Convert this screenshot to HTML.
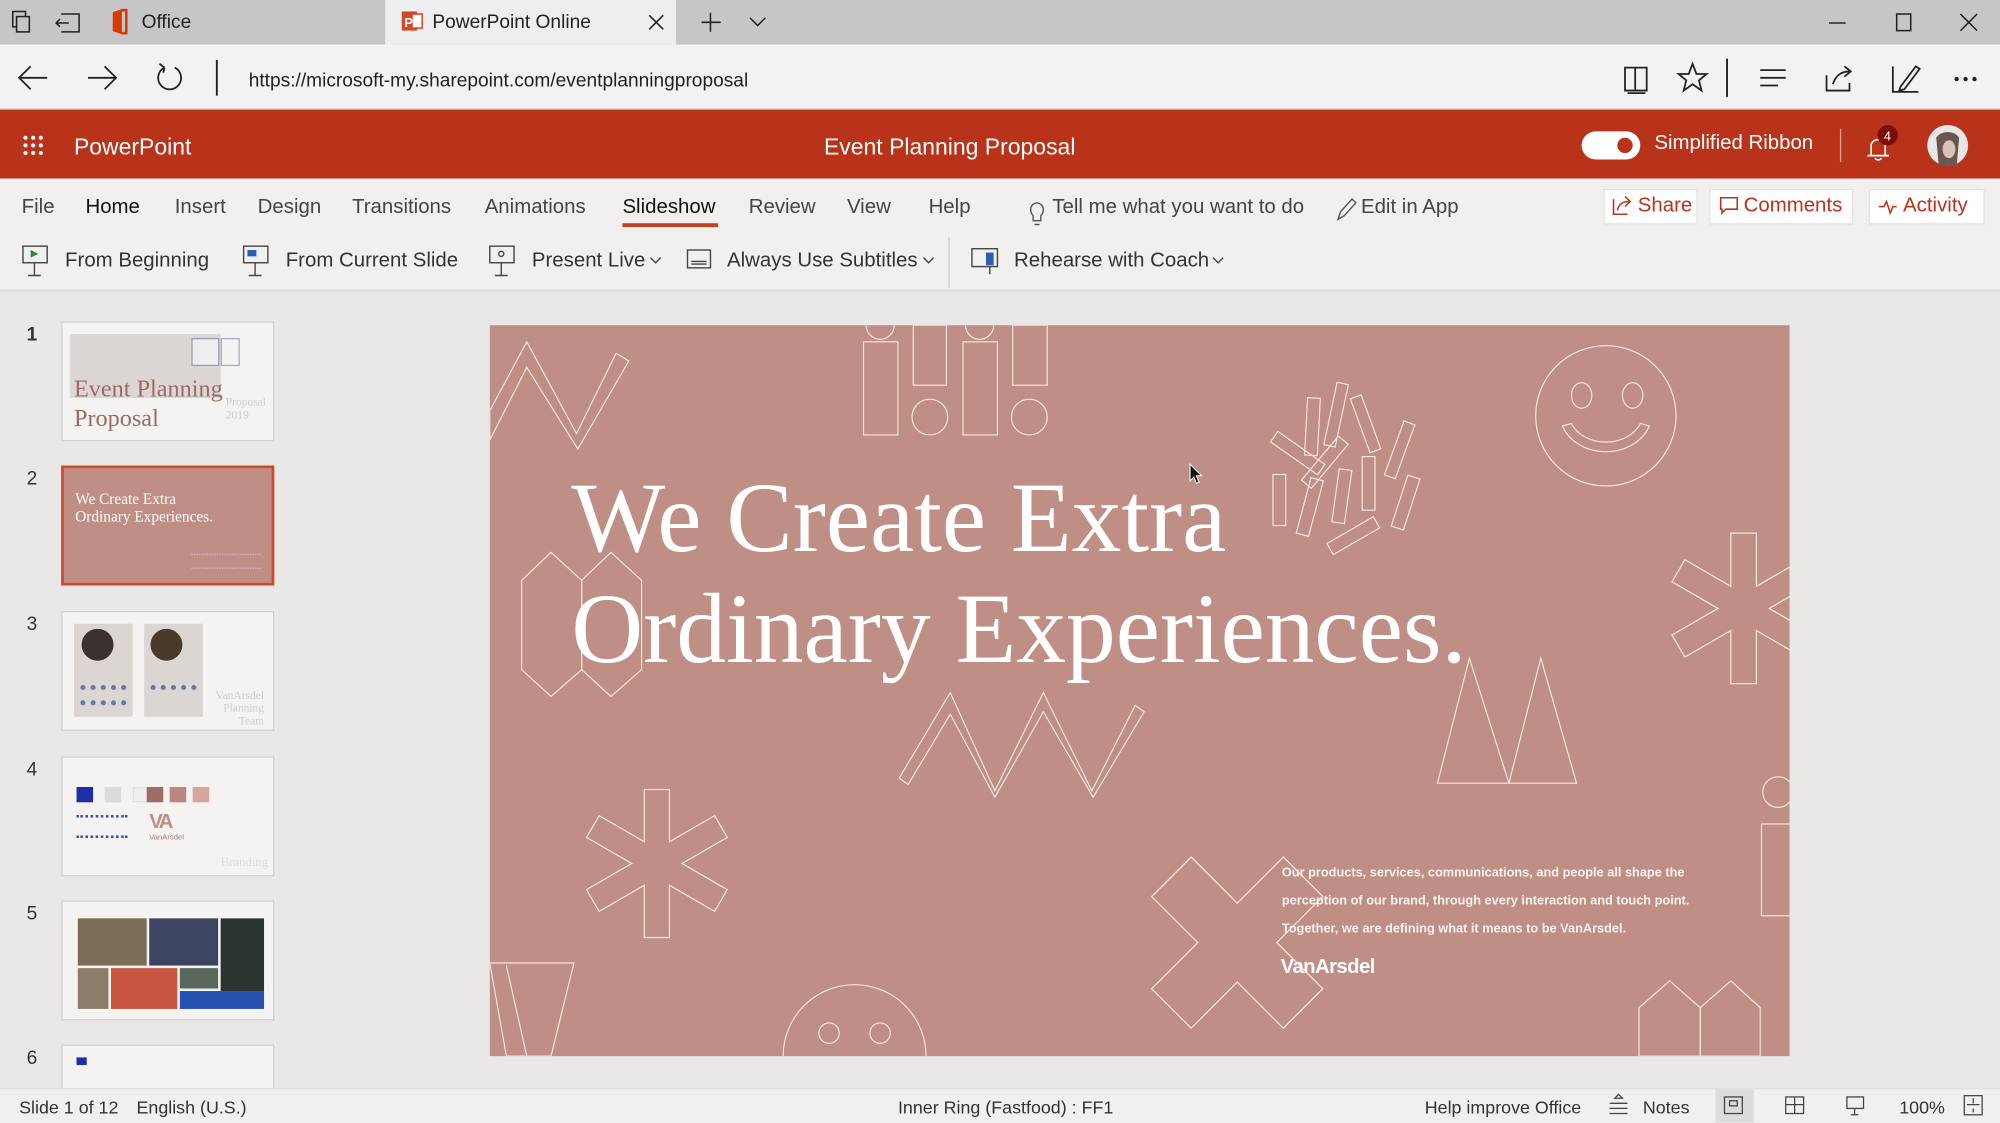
<!DOCTYPE html>
<html><head><meta charset="utf-8">
<style>
*{margin:0;padding:0;box-sizing:border-box}
html,body{width:2000px;height:1123px;overflow:hidden;background:#eae8e6}
#w{position:absolute;left:0;top:0;width:1568px;height:880px;transform:scale(1.27551);transform-origin:0 0;font-family:"Liberation Sans",sans-serif;color:#333;background:#eae8e6}
.a{position:absolute;white-space:nowrap}
.ser{font-family:"Liberation Serif",serif}
svg{position:absolute;overflow:visible}
.btn{position:absolute;top:148px;height:28px;background:#fff;border:1px solid #e3e1df;color:#b7341b;font-size:16px;line-height:26px;padding-left:26px}
.thumb{position:absolute;left:48px;width:167px;height:94px;border:1px solid #d4d2d0;background:#f4f3f2;overflow:hidden}
.num{position:absolute;left:18px;width:14px;text-align:center;font-size:15px;color:#333}
.t{top:154px;font-size:16px;color:#444}
.r{top:196px;font-size:16px;color:#333}
</style></head><body><div id="w">

<div class="a" style="left:0;top:0;width:1568px;height:35px;background:#c6c5c8"></div>
<div class="a" style="left:302px;top:0;width:228px;height:35px;background:#eeedef"></div>
<svg style="left:0;top:0" width="1568" height="35" fill="none" stroke="#222" stroke-width="1.2">
<rect x="10" y="9" width="10" height="12"/><rect x="13" y="13" width="10" height="12" fill="#c6c5c8"/>
<path d="M48 11h14v14h-14M44 18h10M47 15l-3 3 3 3"/>
<path d="M89 10l6-2v18l-6-2z" fill="#d83b01" stroke="#d83b01"/><path d="M95 8h4v18h-4" stroke="#d83b01" stroke-width="2"/>
<rect x="315" y="9" width="12" height="15" fill="#d24726" stroke="none"/><rect x="323" y="11" width="8" height="11" fill="#fff" stroke="#d24726"/>
<text x="317" y="21" fill="#fff" stroke="none" font-size="10" font-family="Liberation Sans" font-weight="bold">P</text>
<path d="M509 12l11 11M520 12l-11 11"/>
<path d="M557 10v15M550 17.5h15"/><path d="M588 14l6 6 6-6"/>
<path d="M1434 18h13"/><rect x="1487" y="11" width="11" height="13"/><path d="M1537 11l13 13M1550 11l-13 13"/>
</svg>
<div class="a" style="left:111px;top:9px;font-size:15px;color:#222">Office</div>
<div class="a" style="left:339px;top:9px;font-size:15px;color:#222">PowerPoint Online</div>

<div class="a" style="left:0;top:35px;width:1568px;height:51px;background:#f2f2f2;border-bottom:1px solid #c9c9c9"></div>
<svg style="left:0;top:35px" width="1568" height="51" fill="none" stroke="#222" stroke-width="1.4">
<path d="M15 26h22M24 17l-9 9 9 9"/><path d="M69 26h22M82 17l9 9-9 9"/>
<path d="M129 18a9 9 0 1 0 8 0M129 18l-4-3M129 18l-1 4"/>
<path d="M170 12v28" stroke-width="1.5"/>
<path d="M1274 18h8v18h-8zM1282 18h9v18h-9zM1276 38h14"/>
<path d="M1327 15l3 8h8l-6 5 2 8-7-5-7 5 2-8-6-5h8z"/>
<path d="M1354 11v30" stroke-width="1.5"/>
<path d="M1380 20h20M1380 26h20M1380 32h14"/>
<path d="M1432 24v12h18v-6M1437 31c2-7 7-10 13-10M1446 17l5 4-5 4"/>
<path d="M1484 17v20h20M1490 33l12-16 3 2-12 16-4 1z"/>
<circle cx="1534" cy="27" r="1" fill="#222"/><circle cx="1541" cy="27" r="1" fill="#222"/><circle cx="1548" cy="27" r="1" fill="#222"/>
</svg>
<div class="a" style="left:195px;top:55px;font-size:15px;color:#222">https://microsoft-my.sharepoint.com/eventplanningproposal</div>

<div class="a" style="left:0;top:86px;width:1568px;height:54px;background:#b8331a"></div>
<svg style="left:0;top:86px" width="1568" height="54">
<g fill="#fff"><circle cx="20" cy="22" r="1.6"/><circle cx="26" cy="22" r="1.6"/><circle cx="32" cy="22" r="1.6"/><circle cx="20" cy="28" r="1.6"/><circle cx="26" cy="28" r="1.6"/><circle cx="32" cy="28" r="1.6"/><circle cx="20" cy="34" r="1.6"/><circle cx="26" cy="34" r="1.6"/><circle cx="32" cy="34" r="1.6"/></g>
<rect x="1240" y="17" width="46" height="22" rx="11" fill="#fff"/><circle cx="1274" cy="28" r="6" fill="#b8331a"/>
<path d="M1443 15v26" stroke="#e8a090" stroke-width="1"/>
<path d="M1467 36v-9a6 6 0 0 1 11 0v9h3h-17zM1470 38a3 3 0 0 0 5 0" fill="none" stroke="#fff" stroke-width="1.3"/>
<circle cx="1480" cy="20" r="8" fill="#7a0f0a"/><text x="1477" y="24" fill="#fff" font-size="10" font-family="Liberation Sans">4</text>
<circle cx="1527" cy="28" r="16" fill="#e8e6e6"/><path d="M1518 22a10 8 0 0 1 18 0l-2 22h-14z" fill="#6a5750"/><ellipse cx="1528" cy="31" rx="5" ry="7" fill="#d9c3b5"/>
</svg>
<div class="a" style="left:58px;top:105px;font-size:18px;color:#fff">PowerPoint</div>
<div class="a" style="left:646px;top:105px;font-size:18px;color:#fff">Event Planning Proposal</div>
<div class="a" style="left:1297px;top:104px;font-size:16px;color:#fff">Simplified Ribbon</div>

<div class="a" style="left:0;top:140px;width:1568px;height:88px;background:#f1f0ef;border-bottom:1px solid #dedcda;box-shadow:0 1px 3px rgba(0,0,0,.06)"></div>
<div class="a t" style="left:17px">File</div>
<div class="a t" style="left:67px;color:#111">Home</div>
<div class="a t" style="left:137px">Insert</div>
<div class="a t" style="left:202px">Design</div>
<div class="a t" style="left:276px">Transitions</div>
<div class="a t" style="left:380px">Animations</div>
<div class="a t" style="left:488px;color:#111">Slideshow</div>
<div class="a" style="left:488px;top:175px;width:75px;height:3px;background:#c4401f"></div>
<div class="a t" style="left:587px">Review</div>
<div class="a t" style="left:664px">View</div>
<div class="a t" style="left:728px">Help</div>
<div class="a t" style="left:825px">Tell me what you want to do</div>
<div class="a t" style="left:1067px">Edit in App</div>
<svg style="left:0;top:140px" width="1568" height="90" fill="none" stroke="#555" stroke-width="1.1">
<path d="M810 29c-3-3-3-9 3-10 6 1 6 7 3 10v4h-6z M811 36h4"/>
<path d="M1049 32l2-6 9-10 3 3-9 10z"/>
</svg>
<div class="btn" style="left:1257px;width:74px">Share</div>
<div class="btn" style="left:1340px;width:113px">Comments</div>
<div class="btn" style="left:1465px;width:91px">Activity</div>
<svg style="left:0;top:140px" width="1568" height="90" fill="none" stroke="#b7341b" stroke-width="1.2">
<path d="M1265 16v12h11M1268 25c1-5 4-7 9-7M1274 14l4 4-4 4"/>
<path d="M1349 15h13v9h-9l-3 3v-3h-1z"/>
<path d="M1473 22h4l2-4 3 9 2-5h3"/>
</svg>

<svg style="left:0;top:183px" width="1000" height="45" fill="none" stroke="#444" stroke-width="1.1">
<rect x="18" y="10" width="19" height="13"/><path d="M27 23v10M22 33h10"/><path d="M24 13l6 3-6 3z" fill="#2a8a3a" stroke="none"/>
<rect x="191" y="10" width="19" height="13"/><path d="M200 23v10M195 33h10"/><rect x="194" y="13" width="7" height="5" fill="#2b5fb4" stroke="none"/>
<rect x="384" y="10" width="19" height="13"/><path d="M393 23v10M388 33h10"/><circle cx="393" cy="16" r="2"/>
<path d="M510 19l4 4 4-4M724 19l4 4 4-4M951 19l4 4 4-4"/>
<rect x="539" y="13" width="18" height="14"/><path d="M542 22h12M542 24h12"/>
<path d="M744 3v40" stroke="#ccc"/>
<rect x="762" y="12" width="20" height="14"/><rect x="773" y="15" width="6" height="10" fill="#2b5fb4" stroke="none"/><path d="M776 26v6"/>
</svg>
<div class="a r" style="left:51px">From Beginning</div>
<div class="a r" style="left:224px">From Current Slide</div>
<div class="a r" style="left:417px">Present Live</div>
<div class="a r" style="left:570px">Always Use Subtitles</div>
<div class="a r" style="left:795px">Rehearse with Coach</div>

<div class="num" style="top:254px;font-weight:bold">1</div>
<div class="num" style="top:367px">2</div>
<div class="num" style="top:481px">3</div>
<div class="num" style="top:595px">4</div>
<div class="num" style="top:708px">5</div>
<div class="num" style="top:821px">6</div>

<div class="thumb" style="top:252px">
 <div class="a" style="left:6px;top:9px;width:118px;height:50px;background:#dcd7d5"></div>
 <div class="a" style="left:101px;top:12px;width:22px;height:22px;border:1px solid #99b;background:#eee"></div>
 <div class="a" style="left:124px;top:12px;width:15px;height:22px;border:1px solid #aab"></div>
 <div class="a ser" style="left:9px;top:41px;font-size:19px;line-height:23px;color:#9c6c62">Event Planning<br>Proposal</div>
 <div class="a ser" style="left:128px;top:57px;font-size:9px;color:#ccc;line-height:10px">Proposal<br>2019</div>
</div>
<div class="thumb" style="top:365px;border:2px solid #d24726;background:#bf8e85">
 <div class="a ser" style="left:9px;top:17px;font-size:12px;line-height:14px;color:#fff">We Create Extra<br>Ordinary Experiences.</div>
 <div class="a" style="left:100px;top:67px;width:55px;height:12px;border-top:1px dotted #ead;border-bottom:1px dotted #ead"></div>
</div>
<div class="thumb" style="top:479px">
 <div class="a" style="left:9px;top:9px;width:46px;height:73px;background:#dcd6d3"></div>
 <div class="a" style="left:64px;top:9px;width:46px;height:73px;background:#dcd6d3"></div>
 <div class="a" style="left:15px;top:13px;width:25px;height:25px;border-radius:50%;background:#3a3130"></div>
 <div class="a" style="left:69px;top:13px;width:25px;height:25px;border-radius:50%;background:#4a3a2a"></div>
 <div class="a" style="left:14px;top:57px;width:36px;height:16px;border-top:4px dotted #6678b4;border-bottom:4px dotted #6678b4"></div>
 <div class="a" style="left:69px;top:57px;width:36px;height:12px;border-top:4px dotted #6678b4"></div>
 <div class="a ser" style="left:120px;top:60px;font-size:9px;color:#d4cccc;line-height:10px;text-align:right">VanArsdel<br>Planning<br>Team</div>
</div>
<div class="thumb" style="top:593px">
 <div class="a" style="left:11px;top:23px;width:13px;height:12px;background:#1d2fa6"></div>
 <div class="a" style="left:33px;top:23px;width:13px;height:12px;background:#dedad8"></div>
 <div class="a" style="left:55px;top:23px;width:13px;height:12px;background:#f0efee;border:1px solid #e2e0df"></div>
 <div class="a" style="left:66px;top:23px;width:13px;height:12px;background:#9c6d62"></div>
 <div class="a" style="left:84px;top:23px;width:13px;height:12px;background:#bb867c"></div>
 <div class="a" style="left:102px;top:23px;width:13px;height:12px;background:#d6a69b"></div>
 <div class="a" style="left:11px;top:45px;width:40px;height:18px;border-top:2px dotted #3950b0;border-bottom:2px dotted #3950b0"></div>
 <div class="a" style="left:68px;top:42px;font-size:16px;font-weight:bold;color:#c09088;letter-spacing:-2px">VA</div>
 <div class="a" style="left:68px;top:60px;font-size:6px;color:#a87a70">VanArsdel</div>
 <div class="a ser" style="left:124px;top:77px;font-size:10px;color:#ddd">Branding</div>
</div>
<div class="thumb" style="top:706px">
 <div class="a" style="left:12px;top:13px;width:54px;height:37px;background:#7c6b55"></div>
 <div class="a" style="left:68px;top:13px;width:54px;height:37px;background:#3d4460"></div>
 <div class="a" style="left:124px;top:13px;width:34px;height:57px;background:#2a3431"></div>
 <div class="a" style="left:12px;top:52px;width:24px;height:32px;background:#8b7d6a"></div>
 <div class="a" style="left:38px;top:52px;width:52px;height:32px;background:#c8553f"></div>
 <div class="a" style="left:92px;top:52px;width:30px;height:16px;background:#59685a"></div>
 <div class="a" style="left:92px;top:70px;width:66px;height:14px;background:#2450b0"></div>
</div>
<div class="thumb" style="top:819px;height:40px">
 <div class="a" style="left:11px;top:9px;width:8px;height:6px;background:#1d2fa6"></div>
</div>

<div class="a" style="left:384px;top:255px;width:1019px;height:573px;background:#bf8e85;overflow:hidden">
<svg style="left:0;top:0" width="1019" height="573" viewBox="384 255 1019 573" fill="none" stroke="#f4e8e4" stroke-width="0.9">
<defs>
<path id="ast" d="M0.34 0L0.951 0.353L0.781 0.647L0.17 0.294L0.17 1L-0.17 1L-0.17 0.294L-0.781 0.647L-0.951 0.353L-0.34 0L-0.951 -0.353L-0.781 -0.647L-0.17 -0.294L-0.17 -1L0.17 -1L0.17 -0.294L0.781 -0.647L0.951 -0.353Z"/>
<path id="xx" d="M0.424 0L0.919 0.495L0.495 0.919L0 0.424L-0.495 0.919L-0.919 0.495L-0.424 0L-0.919 -0.495L-0.495 -0.919L0 -0.424L0.495 -0.919L0.919 -0.495Z"/>
</defs>
<polygon points="384,322 413,268 452,340 483,277 493,283 453,352 413,288 384,345"/>
<rect x="677" y="268" width="27" height="73"/><circle cx="690" cy="255" r="11"/>
<rect x="716" y="255" width="26" height="47"/><circle cx="729" cy="327" r="14"/>
<rect x="755" y="268" width="27" height="73"/><circle cx="768" cy="255" r="11"/>
<rect x="794" y="255" width="27" height="47"/><circle cx="807" cy="327" r="14"/>
<g>
<rect x="1024" y="312" width="10" height="45" transform="rotate(3 1029 334)"/>
<rect x="1043" y="300" width="9" height="50" transform="rotate(12 1047 325)"/>
<rect x="1066" y="310" width="9" height="45" transform="rotate(-20 1070 332)"/>
<rect x="1093" y="330" width="9" height="45" transform="rotate(20 1097 352)"/>
<rect x="995" y="350" width="45" height="10" transform="rotate(35 1017 355)"/>
<rect x="1034" y="340" width="10" height="45" transform="rotate(40 1039 362)"/>
<rect x="998" y="372" width="10" height="40"/>
<rect x="1022" y="375" width="10" height="45" transform="rotate(15 1027 397)"/>
<rect x="1047" y="368" width="10" height="42" transform="rotate(8 1052 389)"/>
<rect x="1068" y="358" width="10" height="42"/>
<rect x="1097" y="373" width="10" height="42" transform="rotate(18 1102 394)"/>
<rect x="1040" y="415" width="42" height="10" transform="rotate(-30 1061 420)"/>
</g>
<circle cx="1259" cy="326" r="55"/>
<ellipse cx="1240" cy="310" rx="8" ry="10"/><ellipse cx="1280" cy="310" rx="8" ry="10"/>
<path d="M1225 334a36 30 0 0 0 68 0l-7-2a29 23 0 0 1-54 0z"/>
<polygon points="409,455 432,433 456,455 456,525 432,546 409,525"/>
<polygon points="456,455 479,433 503,455 503,525 479,546 456,525"/>
<polygon points="705,610 745,543 780,620 818,543 856,620 890,553 897,558 857,625 818,558 780,625 745,560 712,615"/>
<polygon points="1127,614 1152,516 1183,614"/><polygon points="1183,614 1208,516 1236,614"/>
<use href="#ast" transform="translate(515,677) scale(58)" stroke-width="0.016"/>
<use href="#ast" transform="translate(1367,477) scale(59)" stroke-width="0.016"/>
<use href="#xx" transform="translate(970,739) scale(73)" stroke-width="0.013"/>
<circle cx="670" cy="828" r="56"/><circle cx="650" cy="810" r="8"/><circle cx="690" cy="810" r="8"/>
<polygon points="384,755 450,755 432,828 397,828"/><path d="M397,757 413,828"/>
<circle cx="1394" cy="621" r="12"/><rect x="1381" y="646" width="30" height="72"/>
<polygon points="1285,790 1309,769 1333,790 1333,828 1285,828"/><polygon points="1333,790 1357,769 1380,790 1380,828 1333,828"/>
</svg>
<div class="a ser" style="left:64px;top:107px;font-size:78px;line-height:87px;color:#fff">We Create Extra<br>Ordinary Experiences.</div>
<div class="a" style="left:621px;top:419px;font-size:10px;line-height:22px;font-weight:bold;color:#fbf3f0">Our products, services, communications, and people all shape the<br>perception of our brand, through every interaction and touch point.<br>Together, we are defining what it means to be VanArsdel.</div>
<div class="a" style="left:620px;top:495px;font-size:16px;font-weight:bold;color:#fff;letter-spacing:-0.5px">VanArsdel</div>
</div>
<svg style="left:932px;top:363px" width="12" height="18"><path d="M1 1v13l3-3 2 5 2-1-2-5h4z" fill="#111" stroke="#fff" stroke-width="0.8"/></svg>

<div class="a" style="left:0;top:853px;width:1568px;height:27px;background:#f1f0ef;border-top:1px solid #e2e0de"></div>
<div class="a" style="left:1345px;top:854px;width:30px;height:26px;background:#dddcdb"></div>
<div class="a" style="top:860px;left:15px;font-size:14px;color:#333">Slide 1 of 12</div>
<div class="a" style="top:860px;left:107px;font-size:14px;color:#333">English (U.S.)</div>
<div class="a" style="top:860px;left:704px;font-size:14px;color:#333">Inner Ring (Fastfood) : FF1</div>
<div class="a" style="top:860px;left:1117px;font-size:14px;color:#333">Help improve Office</div>
<div class="a" style="top:860px;left:1288px;font-size:14px;color:#333">Notes</div>
<div class="a" style="top:860px;left:1489px;font-size:14px;color:#333">100%</div>
<svg style="left:0;top:853px" width="1568" height="27" fill="none" stroke="#444" stroke-width="1">
<path d="M1262 12h14M1262 16h14M1262 20h14M1269 5l-3 3h6z"/>
<rect x="1352" y="7" width="14" height="13"/><rect x="1356" y="10" width="6" height="4"/>
<rect x="1400" y="7" width="14" height="13"/><path d="M1407 7v13M1400 13h14"/>
<rect x="1448" y="7" width="13" height="9"/><path d="M1454 16v5M1451 21h6"/>
<rect x="1540" y="6" width="14" height="15"/><path d="M1547 8v4M1547 16v3M1542 13h10"/>
</svg>
</div></body></html>
